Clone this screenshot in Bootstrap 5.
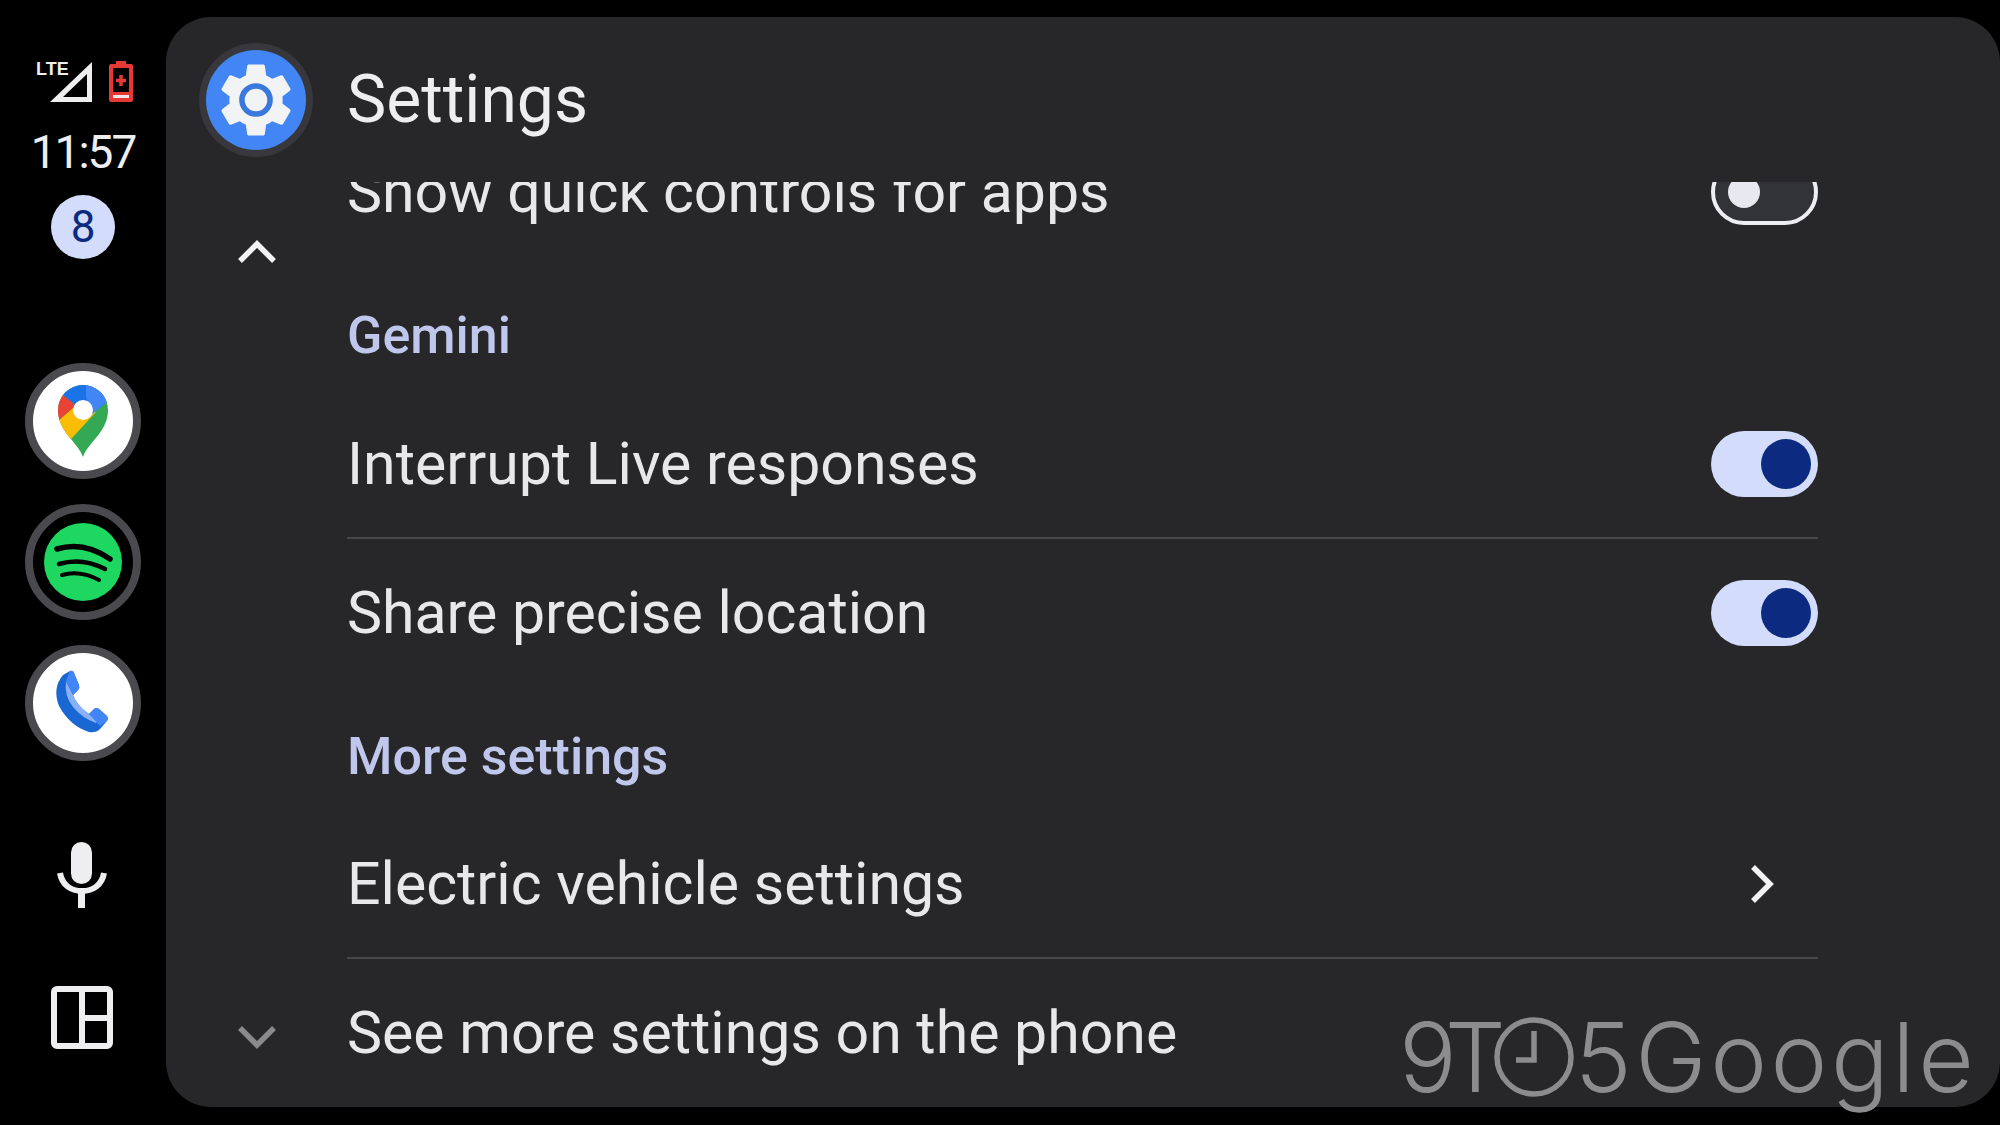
<!DOCTYPE html>
<html lang="en">
<head>
  <meta charset="UTF-8" />
  <title>Settings</title>
  <link href="https://cdn.jsdelivr.net/npm/bootstrap@5.3.2/dist/css/bootstrap.min.css" rel="stylesheet" />
  <style>
    body { background: #000; font-family: Roboto, "Liberation Sans", sans-serif; color: #e8e8ea; }
    .screen { width: 2000px; height: 1125px; overflow: hidden; background: #000; position: relative; }
    .rail { width: 166px; flex: none; }
    .status-line { height: 41px; margin-top: 61px; padding-left: 37px; gap: 16px; position: relative; }
    .lte-text { position: absolute; left: 36px; top: -1px; font: 700 18px/18px "Liberation Sans", sans-serif; color: #eee; }
    .signal-icon { margin-left: 13px; }
    .clock-text { font-size: 46px; line-height: 56px; margin-top: 22px; color: #eeeef0; letter-spacing: -2px; }
    .count-pill { width: 64px; height: 64px; margin-top: 15px; background: #d3dcfb; color: #0b2a80; font-size: 44px; line-height: 64px; text-align: center; border-radius: 50%; }
    .app-ring { width: 116px; height: 116px; border-radius: 50%; border: 8px solid #4a4a4e; display: block; }
    .app-stack { margin-top: 104px; gap: 25px; }
    .mic-icon { margin-top: 81px; margin-right: 3px; }
    .grid-icon { margin-top: 78px; margin-right: 2px; }
    .panel { flex: 1; margin: 17px 0 18px; background: #272729; border-radius: 45px; overflow: hidden; }
    .panel-head { height: 165px; }
    .head-icon { width: 114px; height: 114px; margin: 26px 0 0 33px; flex: none; }
    .head-title { font-size: 66px; line-height: 80px; margin: 43px 0 0 34px; color: #eeeef0; }
    .panel-body { height: 925px; }
    .scroll-col { width: 181px; flex: none; padding: 58px 0 58px; }
    .list-col { flex: 1; padding-right: 182px; overflow: hidden; }
    .item-clipped { height: 43px; overflow: hidden; }
    .item-clipped > * { height: 66px; }
    .item-line { height: 148px; border-bottom: 2px solid #48484b; }
    .item-line.no-rule { border-bottom: 0; }
    .item-text { font-size: 59px; line-height: 66px; white-space: nowrap; }
    .group-title { font-size: 52px; line-height: 66px; color: #c0c7ec; font-weight: 500; }
    .group-first { margin: 78px 0 22px; }
    .group-next { margin: 37px 0 21px; }
    .toggle-shape { width: 107px; height: 66px; border-radius: 33px; background: #d3dcfb; position: relative; flex: none; }
    .toggle-shape::after { content: ""; position: absolute; right: 7px; top: 8px; width: 50px; height: 50px; border-radius: 50%; background: #0b2a80; }
    .toggle-shape.is-off { background: #323336; border: 4px solid #eeeef0; }
    .toggle-shape.is-off::after { right: auto; left: 13px; top: 13px; width: 32px; height: 32px; background: #e8e8f0; }
    .go-icon { margin-right: 43px; }
    .brand-mark { position: absolute; left: 1399px; top: 1002px; font-family: Inter, Lato, sans-serif; font-weight: 300; font-size: 96px; line-height: 110px; color: #8c8c8e; }
    .brand-lead { letter-spacing: -12px; }
    .brand-tail { letter-spacing: 3.500px; margin-left: 1px; }
  </style>
</head>
<body>
  <div class="screen d-flex">
    <!-- left rail -->
    <div class="rail d-flex flex-column align-items-center">
      <div class="status-line d-flex w-100">
        <span class="lte-text">LTE</span>
        <svg class="signal-icon" width="43" height="41" viewBox="0 0 43 41"><path d="M0 41 42 1V41Z M13 36H37V13Z" fill="#eee" fill-rule="evenodd"/></svg>
        <svg width="24" height="41" viewBox="0 0 24 41"><path d="M7 0h10v3h5a2 2 0 0 1 2 2v34a2 2 0 0 1-2 2H2a2 2 0 0 1-2-2V5a2 2 0 0 1 2-2h5z" fill="#e53935"/><rect x="4" y="7" width="16" height="24" fill="#000"/><rect x="4" y="34" width="16" height="3" fill="#f5e6e6"/><path d="M12 14v11M7 19.500h10" stroke="#e53935" stroke-width="3.500"/></svg>
      </div>
      <div class="clock-text">11:57</div>
      <div class="count-pill">8</div>
      <div class="app-stack d-flex flex-column">
        <div class="app-ring bg-white">
          <svg width="100" height="100" viewBox="7 7 100 100">
            <defs><clipPath id="pinClip"><path d="M57 93C52 78 32 68 32 46A25 25 0 0 1 82 46C82 68 62 78 57 93Z"/></clipPath></defs>
            <g clip-path="url(#pinClip)">
              <rect x="20" y="10" width="80" height="90" fill="#34a853"/>
              <path d="M46 74 70 48 48 43 33 56 20 60 30 90Z" fill="#fbbc04"/>
              <path d="M37 31 52 43 48 43 33 56 20 60V20Z" fill="#ea4335"/>
              <path d="M37 31 52 43 66 50 81 38 90 30V10H30Z" fill="#1a73e8"/>
              <path d="M60 10V33L66 50 81 38 90 30V10Z" fill="#4285f4"/>
            </g>
            <circle cx="57" cy="46" r="10" fill="#fff"/>
          </svg>
        </div>
        <div class="app-ring bg-black">
          <svg width="100" height="100" viewBox="7 7 100 100">
            <circle cx="57" cy="57" r="39" fill="#1ed760"/>
            <g fill="none" stroke="#000" stroke-linecap="round">
              <path d="M31 44Q58 36 84 54" stroke-width="5.500"/>
              <path d="M33 59Q56 52 79 64" stroke-width="4.500"/>
              <path d="M36 70Q54 65 73 75" stroke-width="4"/>
            </g>
          </svg>
        </div>
        <div class="app-ring bg-white">
          <svg width="100" height="100" viewBox="7 7 100 100">
            <path d="M37 29 44 25Q47 24 48 27L53 39Q54 42 52 44L47 49Q51 60 63 68L68 63Q70 61 73 63L81 70Q83 73 80 76L74 83Q70 87 63 86Q44 80 33 60Q26 42 37 29Z" fill="#1967d2"/>
            <path d="M40 35Q38 50 47 61T70 77L74 72 63 68Q51 60 47 49Z" fill="#8ab0f7"/>
            <path d="M44 25Q47 24 48 27L53 39Q54 42 52 44L47 49 40 35Z M63 68 68 63Q70 61 73 63L81 70Q83 73 80 76L74 80Z" fill="#4285f4"/>
          </svg>
        </div>
      </div>
      <svg class="mic-icon" width="50" height="66" viewBox="0 0 50 66"><rect x="14" y="0" width="21" height="42" rx="10.500" fill="#eeeef0"/><path d="M3 31C5 43 14 49 25 49S45 43 47 31" fill="none" stroke="#eeeef0" stroke-width="6"/><rect x="21" y="48" width="7" height="18" fill="#eeeef0"/></svg>
      <svg class="grid-icon" width="62" height="63" viewBox="0 0 62 63"><rect x="3" y="3" width="56" height="57" rx="3" fill="none" stroke="#eeeef0" stroke-width="6"/><path d="M31 3V60M31 32H59" stroke="#eeeef0" stroke-width="6"/></svg>
    </div>

    <!-- settings panel -->
    <div class="panel">
      <div class="panel-head d-flex">
        <svg class="head-icon" viewBox="0 0 114 114">
          <circle cx="57" cy="57" r="57" fill="#38383c"/>
          <circle cx="57" cy="57" r="50" fill="#4285f4"/>
          <g transform="translate(12.600 12.600) scale(3.700)">
            <path fill="#f1f3f4" d="M19.140 12.940c.04-.3.060-.61.060-.94 0-.32-.02-.64-.07-.94l2.030-1.580c.18-.14.230-.41.120-.61l-1.920-3.320c-.12-.22-.37-.29-.59-.22l-2.390.96c-.5-.38-1.030-.7-1.620-.94l-.36-2.540c-.04-.24-.24-.41-.48-.41h-3.840c-.24 0-.43.17-.47.41l-.36 2.540c-.59.24-1.130.57-1.620.94l-2.390-.96c-.22-.08-.47 0-.59.22L2.740 8.870c-.12.21-.08.47.12.61l2.030 1.580c-.05.3-.09.63-.09.94s.02.64.07.94l-2.030 1.580c-.18.14-.23.41-.12.61l1.920 3.320c.12.22.37.29.59.22l2.390-.96c.5.38 1.030.7 1.620.94l.36 2.540c.05.24.24.41.48.41h3.840c.24 0 .44-.17.47-.41l.36-2.540c.59-.24 1.130-.56 1.620-.94l2.390.96c.22.08.47 0 .59-.22l1.920-3.320c.12-.22.07-.47-.12-.61l-2.010-1.580z"/>
            <circle cx="12" cy="12" r="3.800" fill="#f1f3f4" stroke="#3b78dc" stroke-width="1.500"/>
          </g>
        </svg>
        <div class="head-title">Settings</div>
      </div>
      <div class="panel-body d-flex">
        <div class="scroll-col d-flex flex-column justify-content-between align-items-center">
          <svg width="40" height="24" viewBox="0 0 40 24"><path d="M3 21 20 4 37 21" fill="none" stroke="#f2f2f2" stroke-width="5.500"/></svg>
          <svg width="40" height="24" viewBox="0 0 40 24"><path d="M3 3 20 20 37 3" fill="none" stroke="#8a8a8a" stroke-width="5.500"/></svg>
        </div>
        <div class="list-col">
          <div class="item-clipped d-flex justify-content-between align-items-end">
            <div class="item-text">Show quick controls for apps</div>
            <div class="toggle-shape is-off"></div>
          </div>
          <div class="group-title group-first">Gemini</div>
          <div class="item-line d-flex justify-content-between align-items-center">
            <div class="item-text">Interrupt Live responses</div>
            <div class="toggle-shape"></div>
          </div>
          <div class="item-line no-rule d-flex justify-content-between align-items-center">
            <div class="item-text">Share precise location</div>
            <div class="toggle-shape"></div>
          </div>
          <div class="group-title group-next">More settings</div>
          <div class="item-line d-flex justify-content-between align-items-center">
            <div class="item-text">Electric vehicle settings</div>
            <svg class="go-icon" width="26" height="40" viewBox="0 0 26 40"><path d="M4 3 21 20 4 37" fill="none" stroke="#f2f2f2" stroke-width="5.500"/></svg>
          </div>
          <div class="item-line no-rule d-flex justify-content-between align-items-center">
            <div class="item-text">See more settings on the phone</div>
          </div>
        </div>
      </div>
    </div>
    <div class="brand-mark d-flex align-items-center"><span class="brand-lead">9T</span><svg width="80" height="80" viewBox="0 0 80 80"><circle cx="40" cy="40" r="37" fill="none" stroke="#8c8c8e" stroke-width="5.500"/><path d="M40 14V43H22" fill="none" stroke="#8c8c8e" stroke-width="5.500"/></svg><span class="brand-tail">5Google</span></div>
  </div>
  <script src="https://cdn.jsdelivr.net/npm/bootstrap@5.3.2/dist/js/bootstrap.bundle.min.js"></script>
</body>
</html>
